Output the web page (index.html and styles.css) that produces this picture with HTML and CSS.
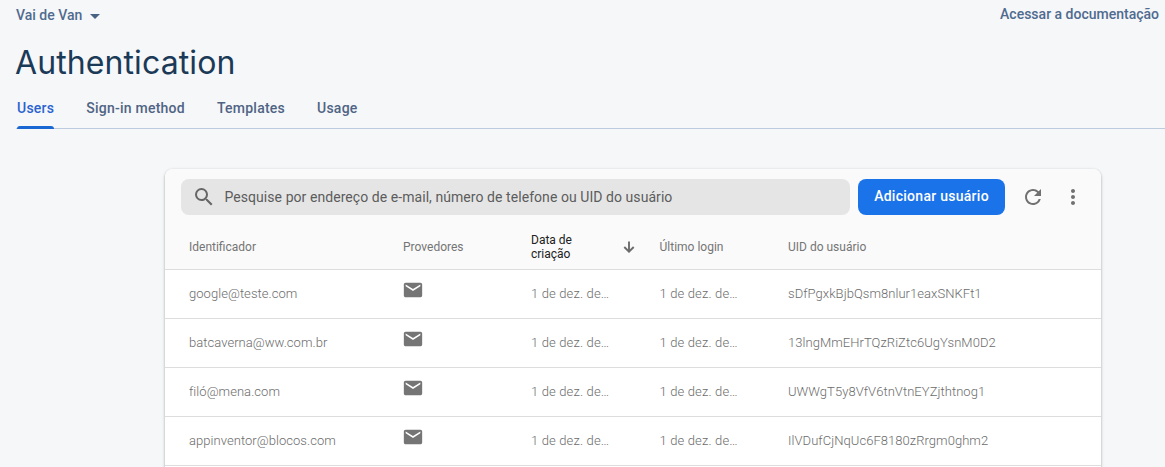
FILE: index.html
```html
<!DOCTYPE html>
<html lang="pt-BR">
<head>
<meta charset="utf-8">
<title>Authentication</title>
<link rel="stylesheet" href="styles.css">
</head>
<body>
<svg class="defs" width="0" height="0"><symbol id="mail" viewBox="0 0 24 24"><path d="M20 4H4c-1.1 0-2 .9-2 2v12c0 1.1.9 2 2 2h16c1.1 0 2-.9 2-2V6c0-1.1-.9-2-2-2zm0 4l-8 5-8-5V6l8 5 8-5v2z"/></symbol></svg>
<header class="topbar">
  <div class="project"><span>Vai de Van</span><span class="caret"></span></div>
  <a class="docs">Acessar a documentação</a>
</header>
<h1 class="title">Authentication</h1>
<nav class="tabs">
  <a class="tab active">Users</a>
  <a class="tab">Sign-in method</a>
  <a class="tab">Templates</a>
  <a class="tab">Usage</a>
</nav>
<main class="card">
  <div class="toolbar">
    <div class="search">
      <svg class="icon" viewBox="0 0 24 24"><path d="M15.5 14h-.79l-.28-.27A6.471 6.471 0 0 0 16 9.5 6.5 6.5 0 1 0 9.5 16c1.61 0 3.09-.59 4.23-1.57l.27.28v.79l5 4.99L20.49 19l-4.99-5zm-6 0C7.01 14 5 11.99 5 9.500S7.01 5 9.5 5 14 7.01 14 9.5 11.99 14 9.5 14z"/></svg>
      <span class="placeholder">Pesquise por endereço de e-mail, número de telefone ou UID do usuário</span>
    </div>
    <button class="add">Adicionar usuário</button>
    <svg class="icon refresh" viewBox="0 0 24 24"><path d="M17.65 6.35A7.958 7.958 0 0 0 12 4c-4.42 0-7.99 3.58-7.99 8s3.57 8 7.99 8c3.73 0 6.84-2.55 7.73-6h-2.08A5.99 5.99 0 0 1 12 18c-3.31 0-6-2.69-6-6s2.69-6 6-6c1.66 0 3.14.69 4.22 1.78L13 11h7V4l-2.35 2.35z"/></svg>
    <svg class="icon more" viewBox="0 0 24 24"><path d="M12 8c1.1 0 2-.9 2-2s-.9-2-2-2-2 .9-2 2 .9 2 2 2zm0 2c-1.1 0-2 .9-2 2s.9 2 2 2 2-.9 2-2-.9-2-2-2zm0 6c-1.1 0-2 .9-2 2s.9 2 2 2 2-.9 2-2-.9-2-2-2z"/></svg>
  </div>
  <div class="row head">
    <span>Identificador</span>
    <span>Provedores</span>
    <span class="sorted"><span>Data de<br>criação</span><svg class="arrow" viewBox="0 0 12 12"><path d="M6 .5v10M1.300 6L6 10.700 10.700 6"/></svg></span>
    <span>Último login</span>
    <span>UID do usuário</span>
  </div>
  <div class="row"><span>google@teste.com</span><svg class="mail"><use href="#mail"/></svg><span>1 de dez. de…</span><span>1 de dez. de…</span><span>sDfPgxkBjbQsm8nlur1eaxSNKFt1</span></div>
  <div class="row"><span>batcaverna@ww.com.br</span><svg class="mail"><use href="#mail"/></svg><span>1 de dez. de…</span><span>1 de dez. de…</span><span>13lngMmEHrTQzRiZtc6UgYsnM0D2</span></div>
  <div class="row"><span>filó@mena.com</span><svg class="mail"><use href="#mail"/></svg><span>1 de dez. de…</span><span>1 de dez. de…</span><span>UWWgT5y8VfV6tnVtnEYZjthtnog1</span></div>
  <div class="row"><span>appinventor@blocos.com</span><svg class="mail"><use href="#mail"/></svg><span>1 de dez. de…</span><span>1 de dez. de…</span><span>IlVDufCjNqUc6F8180zRrgm0ghm2</span></div>
</main>
</body>
</html>
```

FILE: styles.css
```css
* { box-sizing: border-box; }
body { margin: 0; height: 467px; background: #f6f7f9; font-family: Roboto, sans-serif; }
.defs { display: block; }
.topbar { height: 30px; display: flex; justify-content: space-between; padding: 0 6px 0 16px; font-size: 14px; font-weight: 500; line-height: 28px; color: #4f6b8f; }
.project { display: flex; align-items: center; gap: 8px; height: 30px; }
.caret { border: 5px solid transparent; border-top-color: #476282; border-bottom: 0; margin-top: 2px; }
.title { margin: 0; padding-left: 15px; height: 58px; font-family: Inter, sans-serif; font-size: 32px; font-weight: 400; line-height: 65px; letter-spacing: .1px; color: #1b3a57; }
.tabs { height: 41px; margin-left: 16px; padding-left: 1px; display: flex; gap: 32px; border-bottom: 1px solid #bccbdd; font-size: 14px; font-weight: 500; line-height: 40px; color: #4f6484; }
.tab { position: relative; height: 41px; letter-spacing: .24px; }
.active { color: #2a63d0; }
.active::after { content: ""; position: absolute; left: 0; right: 0; bottom: 0; height: 3px; border-radius: 3px 3px 0 0; background: #1967d2; }
.card { width: 936px; height: 298px; margin: 40px 0 0 165px; background: #fff; border-radius: 8px 8px 0 0; box-shadow: 0 1px 2px rgba(60,64,67,.35), 0 1px 3px 1px rgba(60,64,67,.12); }
.toolbar { height: 55px; padding: 10px 16px 0; display: flex; background: #fafafa; border-radius: 8px 8px 0 0; }
.icon { width: 24px; height: 24px; fill: #666; flex: none; }
.search { width: 669px; height: 36px; padding-left: 11px; display: flex; align-items: center; gap: 8.5px; border-radius: 8px; background: #e5e5e5; color: #5c5c5c; font-size: 14px; letter-spacing: .06px; }
.add { width: 147px; height: 36px; margin-left: 8px; padding: 0 0 2px; border: 0; border-radius: 8px; background: #1a73e8; color: #fff; font: 500 14px Roboto, sans-serif; letter-spacing: .27px; }
.refresh { margin: 6px 0 0 15.5px; fill: #717171; }
.more { margin: 6px 0 0 16px; fill: #717171; }
.row { height: 49px; padding-left: 24px; display: grid; grid-template-columns: 214px 128px 128.5px 128.5px 1fr; align-items: center; border-bottom: 1px solid #ddd; color: #6c6c6c; font-size: 13px; font-weight: 300; line-height: 20px; letter-spacing: .05px; }
.row > span { white-space: nowrap; }
.row > span:nth-child(3), .row > span:nth-child(4) { letter-spacing: .15px; }
.row.head { height: 46px; color: #757575; background: #fafafa; font-size: 12px; font-weight: 400; line-height: 14px; letter-spacing: 0; }
.row.head > span { letter-spacing: 0; }
.row.head > .sorted { display: flex; align-items: center; justify-content: space-between; padding-right: 25px; color: #212121; }
.arrow { width: 12px; height: 12px; margin-top: 1px; fill: none; stroke: #6c6c6c; stroke-width: 1.9; }
.mail { width: 22px; height: 22px; margin: 0 0 8px -1px; fill: #757575; }
```
